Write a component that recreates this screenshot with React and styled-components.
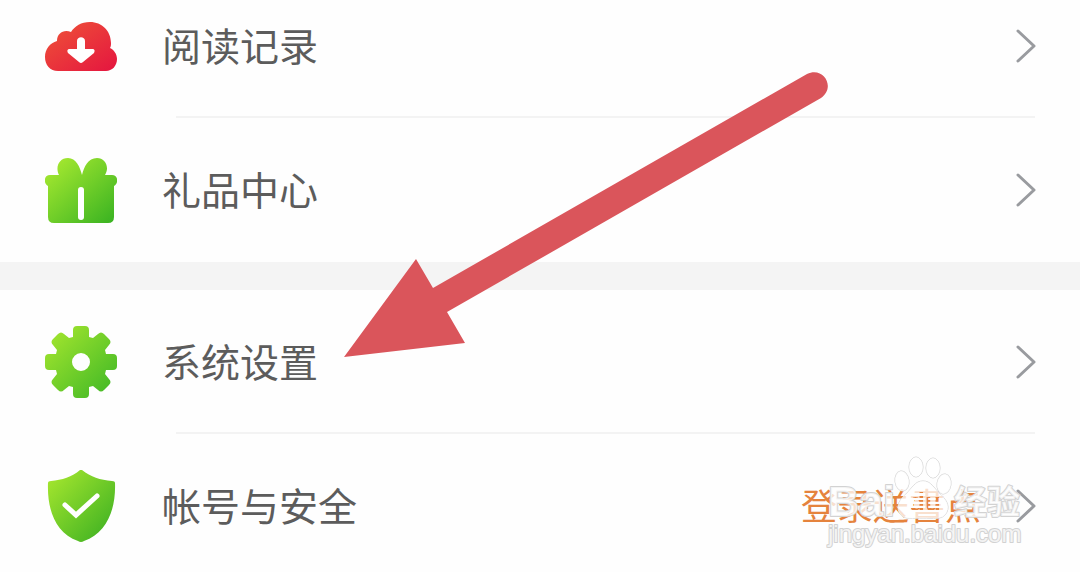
import React from 'react'
import styled, { createGlobalStyle } from 'styled-components'

const TEXT = '#5c5c5c'
const LINE = '#f3f3f3'
const ORANGE = '#e5833d'
const RED = '#da555b'

const GlobalStyle = createGlobalStyle`
    * {
        box-sizing: border-box;
    }
    body {
        margin: 0;
        background: #fefefe;
        font-family: "Noto Sans CJK SC", "Noto Sans", sans-serif;
    }
`

const Page = styled.main`
    position: relative;
    height: 100vh;
    overflow: hidden;
`
/* the list is scrolled a little way under the top edge */
const Menu = styled.nav`
    margin-top: -26px;
`
const Group = styled.ul`
    list-style: none;
    margin: 0;
    padding: 0;

    & + & {
        border-top: 28px solid #f4f4f4;
    }
`
const Item = styled.li`
    display: grid;

    &:not(:last-child)::after {
        content: '';
        height: 2px;
        margin: -2px 45px 0 176px;
        background: ${LINE};
    }
`
const ItemLink = styled.a`
    display: flex;
    align-items: center;
    height: 144px;
    padding: 0 44px 0 45px;
    color: ${TEXT};
    text-decoration: none;
`
const Label = styled.span`
    flex: 1;
    margin-left: 45px;
    padding-bottom: 4px;
    font-size: 39px;
    line-height: 56px;
`
const Note = styled.span`
    margin-right: 35px;
    padding-bottom: 4px;
    font-size: 36px;
    line-height: 56px;
    color: ${ORANGE};
`
const Icon = styled.svg`
    width: 72px;
    height: 72px;
    flex: none;
`
const Chevron = styled.svg`
    width: 20px;
    height: 34px;
    flex: none;
    fill: none;
    stroke: #999b9f;
    stroke-width: 3;
    stroke-linecap: round;
    stroke-linejoin: round;
`
const Arrow = styled.svg`
    position: absolute;
    top: 72px;
    left: 344px;
    width: 484px;
    height: 286px;
    fill: ${RED};
    pointer-events: none;
`
const Watermark = styled.svg`
    position: absolute;
    right: 54px;
    bottom: 16px;
    width: 200px;
    height: 104px;
    fill: #fff;
    fill-opacity: 0.75;
    stroke: #d2d2d2;
    stroke-width: 2;
    stroke-linejoin: round;
    paint-order: stroke;
    pointer-events: none;

    ellipse,
    path {
        stroke-width: 1;
    }
`

const Gradient = ({ id, from, to }) => (
    <defs>
        <linearGradient id={id} x1='0' y1='0' x2='1' y2='1'>
            <stop offset='0.05' stopColor={from} />
            <stop offset='0.95' stopColor={to} />
        </linearGradient>
    </defs>
)

const CloudIcon = () => (
    <Icon viewBox='0 0 72 72' aria-hidden='true'>
        <Gradient id='cloud' from='#ee5138' to='#e5183f' />
        <path
            fill='url(#cloud)'
            d='M13 61C5 61 0 55 0 47c0-8 5-14 12-16 0-8 7-12 14-9C30 16 36 12 45 12c12 0 21 9 21 21 0 2 0 3-1 5 4 2 7 6 7 11 0 7-5 12-11 12Z'
        />
        <path
            fill='#fff'
            d='M32 31c0-5 8-5 8 0v8h7c3 0 3 2 2 4L38 52q-2 2-4 0L23 43c-1-2-1-4 2-4h7Z'
        />
    </Icon>
)

const GiftIcon = () => (
    <Icon viewBox='0 0 72 72' aria-hidden='true'>
        <Gradient id='gift' from='#a9ea30' to='#3cb422' />
        <path
            fill='url(#gift)'
            d='M5 21h9C10 13 14 4 23 4c8 0 12 9 14 17 2-8 6-17 15-17 8 0 13 9 8 17h7c6 0 7 8 2 11v31q0 6-6 6H9q-6 0-6-6V32C-2 29-1 21 5 21Z'
        />
        <path d='M36 36v27' stroke='#fff' strokeWidth='6' strokeLinecap='round' />
    </Icon>
)

const GearIcon = () => (
    <Icon viewBox='0 0 72 72' aria-hidden='true'>
        <Gradient id='gear' from='#a5e62e' to='#40b826' />
        <path
            fill='url(#gear)'
            fillRule='evenodd'
            d='M28 4Q28 0 32 0H40Q44 0 44 4V11L48 12 53 8Q56 5 59 8L64 13Q67 16 64 19L60 24 61 28H68Q72 28 72 32V40Q72 44 68 44H61L60 48 64 53Q67 56 64 59L59 64Q56 67 53 64L48 60 44 61V68Q44 72 40 72H32Q28 72 28 68V61L24 60 19 64Q16 67 13 64L8 59Q5 56 8 53L12 48 11 44H4Q0 44 0 40V32Q0 28 4 28H11L12 24 8 19Q5 16 8 13L13 8Q16 5 19 8L24 12 28 11ZM36 27a9 9 0 1 0 0 18 9 9 0 1 0 0-18Z'
        />
    </Icon>
)

const ShieldIcon = () => (
    <Icon viewBox='0 0 72 72' aria-hidden='true'>
        <Gradient id='shield' from='#a5e62e' to='#3cb022' />
        <path
            fill='url(#shield)'
            d='M35 0q1-1 2 0c9 7 18 10 30 11q3 0 3 2c1 26-8 50-31 58q-3 2-6 0C10 63 2 39 3 13q0-2 3-2C17 10 27 7 35 0Z'
        />
        <path
            d='M20 35l11 10 21-19'
            fill='none'
            stroke='#fff'
            strokeWidth='5'
            strokeLinecap='round'
        />
    </Icon>
)

const groups = [
    [
        { title: '阅读记录', icon: CloudIcon },
        { title: '礼品中心', icon: GiftIcon },
    ],
    [
        { title: '系统设置', icon: GearIcon },
        { title: '帐号与安全', icon: ShieldIcon, note: '登录送書点' },
    ],
]

const MenuItem = ({ title, icon: ItemIcon, note }) => (
    <Item>
        <ItemLink href='#'>
            <ItemIcon />
            <Label>{title}</Label>
            {note && <Note>{note}</Note>}
            <Chevron viewBox='0 0 20 34' aria-hidden='true'>
                <path d='M2 2l16 15L2 32' />
            </Chevron>
        </ItemLink>
    </Item>
)

const BaiduMark = () => (
    <Watermark viewBox='0 0 200 104' aria-hidden='true'>
        <defs>
            <mask id='paw'>
                <rect width='200' height='104' fill='#fff' fillOpacity='1' stroke='none' />
                <text
                    x='83'
                    y='59'
                    fill='#000'
                    fillOpacity='1'
                    stroke='none'
                    fontFamily='Liberation Sans'
                    fontWeight='700'
                    fontSize='26'
                >
                    du
                </text>
            </mask>
        </defs>
        <text x='2' y='64' fontFamily='Liberation Sans' fontWeight='700' fontSize='43'>Bai</text>
        <ellipse cx='76' cy='29' rx='7' ry='10' transform='rotate(-8 76 29)' />
        <ellipse cx='90' cy='15' rx='7' ry='10' />
        <ellipse cx='107' cy='16' rx='7' ry='10' />
        <ellipse cx='118' cy='32' rx='7' ry='10' transform='rotate(8 118 32)' />
        <path
            mask='url(#paw)'
            d='M97 29c8 0 11 7 16 12 7 6 11 12 8 19-4 9-15 6-24 6s-20 3-24-6c-3-7 1-13 8-19 5-5 8-12 16-12Z'
        />
        <text x='128' y='62' fontFamily='Noto Sans CJK SC' fontWeight='700' fontSize='33'>经验</text>
        <text x='2' y='90' fontFamily='Liberation Sans' fontSize='24'>jingyan.baidu.com</text>
    </Watermark>
)

const App = () => (
    <Page>
        <GlobalStyle />
        <Menu>
            {groups.map((items, index) => (
                <Group key={index}>
                    {items.map((item) => (
                        <MenuItem key={item.title} {...item} />
                    ))}
                </Group>
            ))}
        </Menu>
        <Arrow viewBox='0 0 484 286' aria-hidden='true'>
            <path d='M0 285L72 187l17 29L463 2c17-8 29 14 14 24L103 240l18 31Z' />
        </Arrow>
        <BaiduMark />
    </Page>
)

export default App
